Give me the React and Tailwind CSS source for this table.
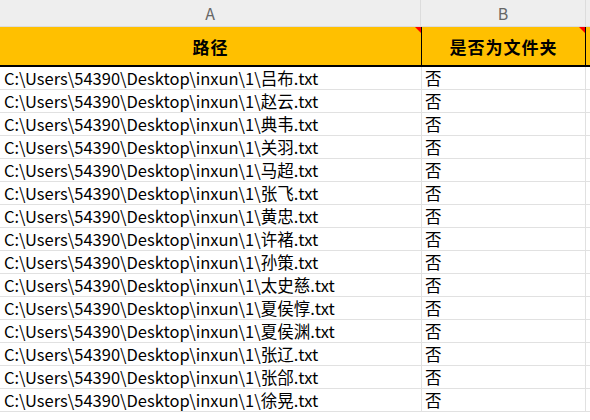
import React from "react";

const names = [
  "吕布", "赵云", "典韦", "关羽", "马超", "张飞", "黄忠", "许褚",
  "孙策", "太史慈", "夏侯惇", "夏侯渊", "张辽", "张郃", "徐晃",
];

function Corner() {
  return (
    <span className="absolute top-0 right-0 w-0 h-0 border-t-[6px] border-l-[6px] border-t-[#ff0000] border-l-transparent" />
  );
}

export default function App() {
  return (
    <div
      className="w-[590px] h-[420px] overflow-hidden bg-white text-black"
      style={{ fontFamily: '"Noto Sans CJK SC", "Noto Sans", sans-serif' }}
    >
      {/* column letters */}
      <div className="flex h-[27px] bg-[#eeeeee] border-b border-[#dcdcdc] text-[#666] text-[16px]">
        <div className="w-[421px] shrink-0 flex items-center justify-center border-r border-[#dcdcdc]">A</div>
        <div className="w-[165px] shrink-0 flex items-center justify-center border-r border-[#dcdcdc]">B</div>
        <div className="flex-1" />
      </div>

      {/* header row */}
      <div className="flex h-[40px] bg-[#ffc000] border-b-2 border-black font-bold text-[17px] tracking-[1px]">
        <div className="relative w-[422px] shrink-0 flex items-center justify-center border-r border-black pt-[2px]">
          路径
          <Corner />
        </div>
        <div className="relative w-[164px] shrink-0 flex items-center justify-center border-r border-black pt-[2px]">
          是否为文件夹
          <Corner />
        </div>
        <div className="flex-1" />
      </div>

      {/* data rows */}
      {names.map((n) => (
        <div key={n} className="flex h-[23px] border-b border-[#e1e1e1] text-[16.5px] leading-[22px]">
          <div className="w-[422px] shrink-0 border-r border-[#e1e1e1] pl-[4px] whitespace-nowrap overflow-hidden">
            {"C:\\Users\\54390\\Desktop\\inxun\\1\\" + n + ".txt"}
          </div>
          <div className="w-[164px] shrink-0 border-r border-[#e1e1e1] pl-[3px]">否</div>
          <div className="flex-1" />
        </div>
      ))}
    </div>
  );
}
